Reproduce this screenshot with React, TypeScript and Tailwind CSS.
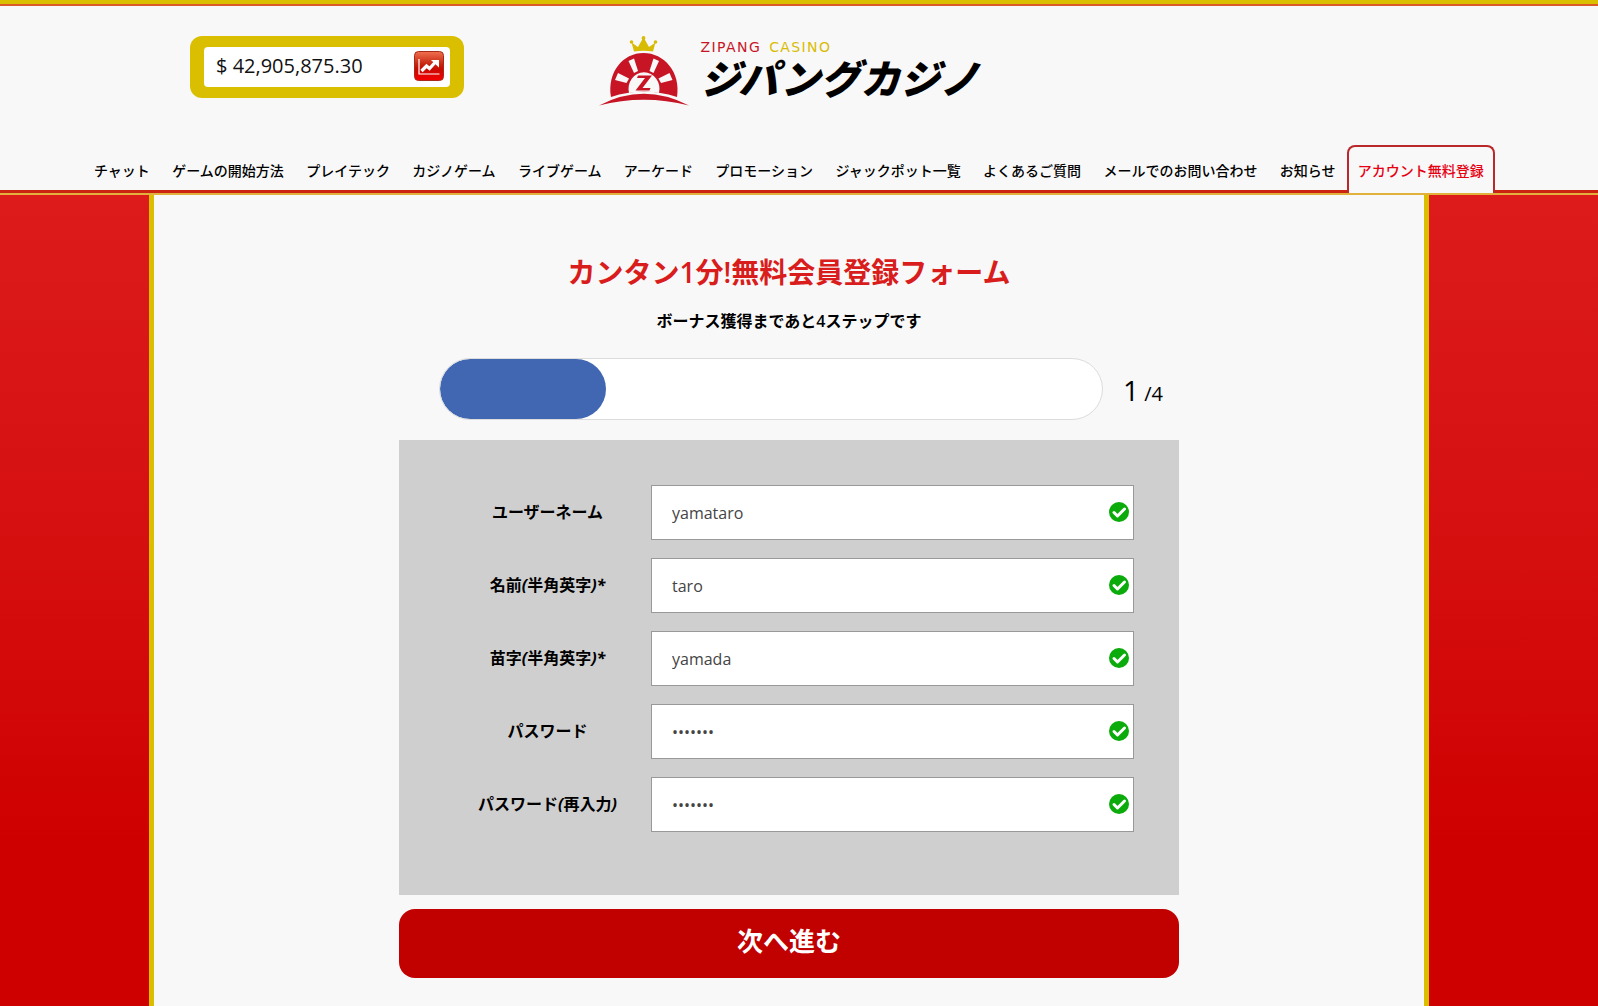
import React, { useState } from 'react';

const NAV_ITEMS = [
    'チャット',
    'ゲームの開始方法',
    'プレイテック',
    'カジノゲーム',
    'ライブゲーム',
    'アーケード',
    'プロモーション',
    'ジャックポット一覧',
    'よくあるご質問',
    'メールでのお問い合わせ',
    'お知らせ',
];

const TOTAL_STEPS = 4;

interface Field {
    id: string;
    type: 'text' | 'password';
    label: React.ReactNode;
    initial: string;
}

const FIELDS: Field[] = [
    { id: 'username', type: 'text', label: 'ユーザーネーム', initial: 'yamataro' },
    { id: 'firstName', type: 'text', label: <>名前<i>(</i>半角英字<i>)*</i></>, initial: 'taro' },
    { id: 'lastName', type: 'text', label: <>苗字<i>(</i>半角英字<i>)*</i></>, initial: 'yamada' },
    { id: 'password', type: 'password', label: 'パスワード', initial: 'abcdefg' },
    { id: 'passwordConfirm', type: 'password', label: <>パスワード<i>(</i>再入力<i>)</i></>, initial: 'abcdefg' },
];

const ChartIcon = () => (
    <svg className="size-[30px]" viewBox="0 0 30 30" aria-hidden="true">
        <defs>
            <linearGradient id="chartBg" x1="0" y1="0" x2="0" y2="1">
                <stop offset="0" stopColor="#f0714f" />
                <stop offset="0.45" stopColor="#c5240f" />
                <stop offset="0.6" stopColor="#c80a00" />
                <stop offset="1" stopColor="#f40000" />
            </linearGradient>
        </defs>
        <rect x="0.5" y="0.5" width="29" height="29" rx="4" fill="url(#chartBg)" stroke="#a82a18" />
        <path d="M5 8v15h20.500" fill="none" stroke="#fff" strokeWidth="1.2" />
        <path d="M7.500 20l5-5 3 2.500 5.500-6" fill="none" stroke="#fff" strokeWidth="3.2" />
        <path d="M17 9h8v7.500z" fill="#fff" />
    </svg>
);

const LogoMark = () => (
    <svg className="h-[70px] w-[90px]" viewBox="0 0 90 70" aria-hidden="true">
        <path d="M35 15.500l-2.500-9 6.500 4.500 4.500-8h2l4.500 8 6.500-4.500-2.500 9q-9.500-1.500-19 0z" fill="#d8bc04" />
        <g fill="#d8bc04">
            <circle cx="32.500" cy="6" r="1.800" />
            <circle cx="44.500" cy="2" r="1.900" />
            <circle cx="56.500" cy="6" r="1.800" />
        </g>
        <path d="M12 61C8 36 24 17 44.500 17S82 36 78 61Q44.500 50 12 61z" fill="#c71526" />
        <path d="M30 57a15.500 16.500 0 1 1 30 0q-15-3-30 0z" fill="#f8f8f8" />
        <g fill="#f8f8f8">
            <path d="M19 37l11 5.500-2.500 4.500-11.500-3z" />
            <path d="M29.500 25l5.500-2.500 4 12.500-4 2z" />
            <path d="M60 25l-5.500-2.500-4 12.500 4 2z" />
            <path d="M70.500 37l-11 5.500 2.500 4.500 11.500-3z" />
        </g>
        <path d="M39 39.500h14l-9.500 12.500h8l-1 2.500H36.500l9.500-12.500h-8z" fill="#c71526" />
        <path d="M0 69.500Q44.500 46 90 69.500 44.500 58 0 69.500z" fill="#c71526" />
    </svg>
);

const CheckIcon = () => (
    <svg className="size-5" viewBox="0 0 20 20" aria-hidden="true">
        <circle cx="10" cy="10" r="10" fill="#0bab0b" />
        <path d="M5 10.500l3.500 3.500 7-7" fill="none" stroke="#fff" strokeWidth="3" strokeLinecap="round" strokeLinejoin="round" />
    </svg>
);

const Header = () => (
    <header className="border-t-4 border-[#dabf00]">
        <div className="h-0.5 bg-[#dc5a28]" />
        <div className="pr-5">
            <div className="mx-auto grid h-[139px] max-w-[1198px] grid-cols-3 items-start pt-[30px]">
                <div className="flex h-[62px] w-[274px] items-center rounded-xl bg-[#dabf00] px-[14px]">
                    <div className="flex h-10 flex-1 items-center justify-between rounded-sm bg-white pr-1.5 pb-0.5 pl-3">
                        <span className="text-xl text-[#111]">$ 42,905,875.30</span>
                        <ChartIcon />
                    </div>
                </div>
                <a href="#" className="flex justify-self-center">
                    <LogoMark />
                    <span className="ml-3 flex flex-col whitespace-nowrap">
                        <span className="mt-0.5 flex h-[18px] gap-2 font-['DejaVu_Sans'] text-sm leading-[18px] tracking-widest text-[#c71526]">
                            <span>ZIPANG</span>
                            <span className="text-[#d8bc04]">CASINO</span>
                        </span>
                        <span className="font-['Liberation_Sans','Noto_Sans_CJK_JP',sans-serif] text-[40px] leading-[48px] font-black text-black italic">
                            ジパングカジノ
                        </span>
                    </span>
                </a>
            </div>
        </div>
        {/* the active tab overlaps the red rule, so it pulls down over the border */}
        <div className="border-b-2 border-[#e2b13c]">
            <nav className="border-b-3 border-[#cc2211] pr-5">
                <ul className="mx-auto flex max-w-[1412px] justify-between text-sm font-medium whitespace-nowrap text-black">
                    {NAV_ITEMS.map((item) => (
                        <li key={item}>
                            <a href="#" className="block px-[11px] pt-4 leading-[20px]">{item}</a>
                        </li>
                    ))}
                    <li className="-mb-[3px]">
                        <a href="#" aria-current="page" className="block h-12 rounded-t-lg border-2 border-b-0 border-[#b9292b] bg-[#f8f8f8] px-[9px] pt-3.5 leading-[20px] text-[#e60012]">
                            アカウント無料登録
                        </a>
                    </li>
                </ul>
            </nav>
        </div>
    </header>
);

function App() {
    const [step] = useState(1);
    const [values, setValues] = useState<Record<string, string>>(
        Object.fromEntries(FIELDS.map((f) => [f.id, f.initial]))
    );

    const handleChange = (e: React.ChangeEvent<HTMLInputElement>) => {
        setValues({ ...values, [e.target.id]: e.target.value });
    };

    return (
        <div className="flex min-h-screen flex-col bg-[#f8f8f8] font-['Open_Sans','Noto_Sans_CJK_JP',sans-serif]">
            <Header />
            <div className="flex flex-1 flex-col bg-linear-to-b from-[#dd1b1b] to-[#cf0000] to-80% pr-5">
                <main className="mx-auto w-full max-w-[1280px] flex-1 border-x-5 border-[#dabf00] bg-[#f8f8f8] pt-14 pb-7">
                    <h1 className="text-center text-[28px] leading-[42px] font-bold text-[#d91c1c]">
                        カンタン<span className="font-semibold">1</span>分<span className="font-semibold">!</span>無料会員登録フォーム
                    </h1>
                    <p className="mt-4 text-center text-base leading-6 font-bold text-black">
                        ボーナス獲得まであと<span className="font-semibold">4</span>ステップです
                    </p>

                    <form className="mx-auto max-w-[780px]" onSubmit={(e) => e.preventDefault()}>
                        <div className="mt-[25px] flex items-center pr-4 pl-10">
                            <div className="h-[62px] flex-1 overflow-hidden rounded-full border border-[#dcdcdc] bg-white">
                                <div className="h-full rounded-full bg-[#4267b2]" style={{ width: `${(step / TOTAL_STEPS) * 100}%` }} />
                            </div>
                            <p className="w-[60px] pt-1 pl-5 text-xl whitespace-nowrap text-black">
                                <span className="text-[28px]">{step}</span> /{TOTAL_STEPS}
                            </p>
                        </div>

                        <div className="mt-5 flex flex-col gap-[18px] bg-[#cfcfcf] px-[45px] pt-[45px] pb-[63px]">
                            {FIELDS.map((field) => (
                                <div key={field.id} className="flex items-center">
                                    <label htmlFor={field.id} className="w-[30%] pb-0.5 text-center text-base font-bold text-black">
                                        {field.label}
                                    </label>
                                    <div className="relative w-[70%]">
                                        <input
                                            id={field.id}
                                            type={field.type}
                                            value={values[field.id]}
                                            onChange={handleChange}
                                            className="block h-[55px] w-full border border-[#999] bg-white pr-8 pl-5 text-base text-[#444]"
                                        />
                                        <span className="absolute inset-y-0 right-[5px] flex items-center pb-0.5">
                                            <CheckIcon />
                                        </span>
                                    </div>
                                </div>
                            ))}
                        </div>

                        <button type="submit" className="mt-3.5 h-[69px] w-full rounded-2xl bg-[#c10000] pb-1 text-[26px] font-bold text-white">
                            次へ進む
                        </button>
                    </form>
                </main>
            </div>
        </div>
    );
}

export default App;
